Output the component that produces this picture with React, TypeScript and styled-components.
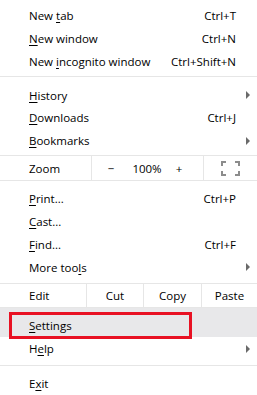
import React from "react";
import styled, { createGlobalStyle } from "styled-components";

const Global = createGlobalStyle`
  html, body { margin: 0; padding: 0; background: #fff; }
  body { font-family: "Open Sans", "Noto Sans", sans-serif; font-size: 11.5px; color: #000; }
`;

const Menu = styled.div`
  width: 257px;
  height: 395px;
  background: #fff;
  display: flex;
  flex-direction: column;
  padding-top: 4px;
  box-sizing: border-box;
  overflow: hidden;
`;

const Item = styled.div<{ $top?: number; $hl?: boolean }>`
  position: relative;
  display: flex;
  align-items: center;
  height: ${(p) => 23 + (p.$top || 0)}px;
  padding-top: ${(p) => p.$top || 0}px;
  box-sizing: border-box;
  padding-left: 29px;
  padding-right: 21px;
  background: ${(p) => (p.$hl ? "#e8e8ea" : "transparent")};
  white-space: nowrap;
`;

const Label = styled.span`
  flex: 1;
`;

const Shortcut = styled.span`
  text-align: right;
`;

const Arrow = styled.span`
  position: absolute;
  right: 7px;
  top: 50%;
  margin-top: -4px;
  width: 0;
  height: 0;
  border-top: 4px solid transparent;
  border-bottom: 4px solid transparent;
  border-left: 4px solid #6a6a6a;
`;

const Sep = styled.div<{ $above: number; $below: number }>`
  height: 1px;
  background: #e6e6e6;
  margin-top: ${(p) => p.$above}px;
  margin-bottom: ${(p) => p.$below}px;
`;

const Bar = styled.div`
  display: grid;
  height: 24px;
  border-top: 1px solid #e6e6e6;
  border-bottom: 1px solid #e6e6e6;
  box-sizing: content-box;
`;

const ZoomBar = styled(Bar)`
  grid-template-columns: 91px 112px 1fr;
  margin-top: 3px;
  margin-bottom: 6px;
`;

const EditBar = styled(Bar)`
  grid-template-columns: 86px 57px 58px 1fr;
  margin-top: 4px;
`;

const Cell = styled.div<{ $left?: boolean; $divider?: boolean }>`
  display: flex;
  align-items: center;
  justify-content: ${(p) => (p.$left ? "flex-start" : "center")};
  padding-left: ${(p) => (p.$left ? "29px" : "0")};
  border-left: ${(p) => (p.$divider ? "1px solid #e6e6e6" : "none")};
`;

const ZoomControls = styled(Cell)`
  justify-content: flex-start;
  gap: 0;
`;

const Ctl = styled.span<{ $w: number }>`
  display: inline-block;
  width: ${(p) => p.$w}px;
  text-align: center;
`;

const Highlight = styled.div`
  position: absolute;
  left: 9px;
  top: 4px;
  width: 177px;
  height: 21px;
  border: 3px solid #e81123;
`;

const U = styled.u`
  text-decoration: underline;
  text-underline-offset: 2px;
`;

const FullIcon = () => (
  <svg width="19" height="15" viewBox="0 0 19 15">
    <g fill="none" stroke="#8c8c8c" strokeWidth="2">
      <path d="M1 5V1h4" />
      <path d="M14 1h4v4" />
      <path d="M18 10v4h-4" />
      <path d="M5 14H1v-4" />
    </g>
  </svg>
);

export default function App() {
  return (
    <>
      <Global />
      <Menu>
        <Item>
          <Label>New <U>t</U>ab</Label>
          <Shortcut>Ctrl+T</Shortcut>
        </Item>
        <Item>
          <Label><U>N</U>ew window</Label>
          <Shortcut>Ctrl+N</Shortcut>
        </Item>
        <Item>
          <Label>New <U>i</U>ncognito window</Label>
          <Shortcut>Ctrl+Shift+N</Shortcut>
        </Item>
        <Sep $above={3} $below={7} />
        <Item>
          <Label><U>H</U>istory</Label>
          <Arrow />
        </Item>
        <Item>
          <Label><U>D</U>ownloads</Label>
          <Shortcut>Ctrl+J</Shortcut>
        </Item>
        <Item>
          <Label><U>B</U>ookmarks</Label>
          <Arrow />
        </Item>
        <ZoomBar>
          <Cell $left>Zoom</Cell>
          <ZoomControls $divider>
            <Ctl $w={38}>−</Ctl>
            <Ctl $w={34}>100%</Ctl>
            <Ctl $w={30}>+</Ctl>
          </ZoomControls>
          <Cell $divider>
            <FullIcon />
          </Cell>
        </ZoomBar>
        <Item>
          <Label><U>P</U>rint...</Label>
          <Shortcut>Ctrl+P</Shortcut>
        </Item>
        <Item>
          <Label><U>C</U>ast...</Label>
        </Item>
        <Item>
          <Label><U>F</U>ind...</Label>
          <Shortcut>Ctrl+F</Shortcut>
        </Item>
        <Item>
          <Label>More too<U>l</U>s</Label>
          <Arrow />
        </Item>
        <EditBar>
          <Cell $left>Edit</Cell>
          <Cell $divider>Cut</Cell>
          <Cell $divider>Copy</Cell>
          <Cell $divider>Paste</Cell>
        </EditBar>
        <Item $top={6} $hl>
          <Label><U>S</U>ettings</Label>
          <Highlight />
        </Item>
        <Item>
          <Label>H<U>e</U>lp</Label>
          <Arrow />
        </Item>
        <Sep $above={5} $below={6} />
        <Item>
          <Label>E<U>x</U>it</Label>
        </Item>
      </Menu>
    </>
  );
}
